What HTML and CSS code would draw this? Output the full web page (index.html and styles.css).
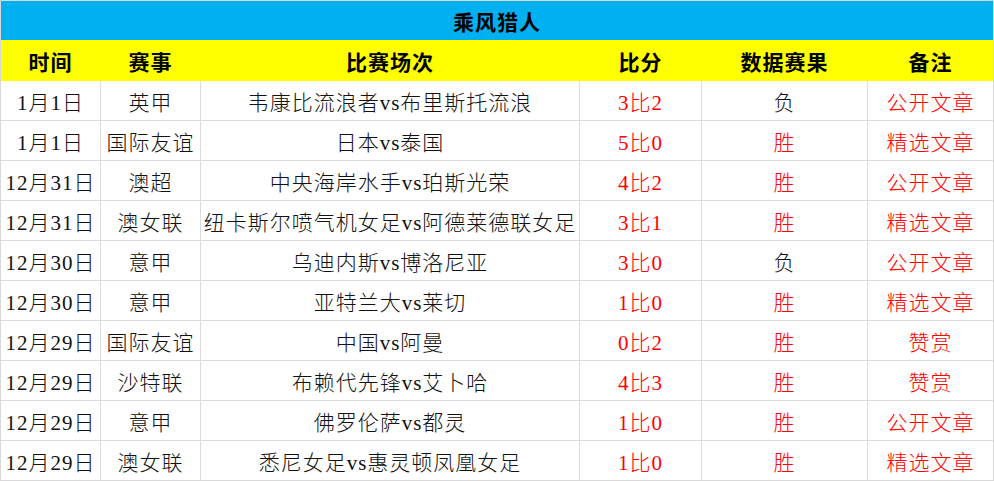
FILE: index.html
```html
<!DOCTYPE html>
<html lang="zh">
<head>
<meta charset="utf-8">
<title>乘风猎人</title>
<link rel="stylesheet" href="styles.css">
</head>
<body>
<div class="sheet">
  <div class="title">乘风猎人</div>
  <div class="row head">
    <div class="c">时间</div><div class="c">赛事</div><div class="c">比赛场次</div><div class="c">比分</div><div class="c">数据赛果</div><div class="c">备注</div>
  </div>
  <div class="row"><div class="c">1月1日</div><div class="c">英甲</div><div class="c">韦康比流浪者vs布里斯托流浪</div><div class="c red">3比2</div><div class="c">负</div><div class="c red">公开文章</div></div>
  <div class="row"><div class="c">1月1日</div><div class="c">国际友谊</div><div class="c">日本vs泰国</div><div class="c red">5比0</div><div class="c red">胜</div><div class="c red">精选文章</div></div>
  <div class="row"><div class="c">12月31日</div><div class="c">澳超</div><div class="c">中央海岸水手vs珀斯光荣</div><div class="c red">4比2</div><div class="c red">胜</div><div class="c red">公开文章</div></div>
  <div class="row"><div class="c">12月31日</div><div class="c">澳女联</div><div class="c">纽卡斯尔喷气机女足vs阿德莱德联女足</div><div class="c red">3比1</div><div class="c red">胜</div><div class="c red">精选文章</div></div>
  <div class="row"><div class="c">12月30日</div><div class="c">意甲</div><div class="c">乌迪内斯vs博洛尼亚</div><div class="c red">3比0</div><div class="c">负</div><div class="c red">公开文章</div></div>
  <div class="row"><div class="c">12月30日</div><div class="c">意甲</div><div class="c">亚特兰大vs莱切</div><div class="c red">1比0</div><div class="c red">胜</div><div class="c red">精选文章</div></div>
  <div class="row"><div class="c">12月29日</div><div class="c">国际友谊</div><div class="c">中国vs阿曼</div><div class="c red">0比2</div><div class="c red">胜</div><div class="c red">赞赏</div></div>
  <div class="row"><div class="c">12月29日</div><div class="c">沙特联</div><div class="c">布赖代先锋vs艾卜哈</div><div class="c red">4比3</div><div class="c red">胜</div><div class="c red">赞赏</div></div>
  <div class="row"><div class="c">12月29日</div><div class="c">意甲</div><div class="c">佛罗伦萨vs都灵</div><div class="c red">1比0</div><div class="c red">胜</div><div class="c red">公开文章</div></div>
  <div class="row"><div class="c">12月29日</div><div class="c">澳女联</div><div class="c">悉尼女足vs惠灵顿凤凰女足</div><div class="c red">1比0</div><div class="c red">胜</div><div class="c red">精选文章</div></div>
</div>
</body>
</html>
```
FILE: styles.css
```css
html, body {
  margin: 0;
  padding: 0;
  background: #ffffff;
}
.sheet {
  width: 994px;
  box-sizing: border-box;
  border: 1px solid #d9d9d9;
  font-family: "Liberation Serif", "Noto Sans CJK SC", serif;
  font-size: 21px;
  font-weight: 300;
  color: #111111;
}
.title {
  height: 39px;
  background: #00b0f0;
  display: flex;
  align-items: center;
  justify-content: center;
  font-weight: bold;
  color: #000000;
  letter-spacing: 1px;
}
.row {
  display: grid;
  grid-template-columns: 99px 100px 379px 122px 166px 126px;
  height: 40px;
  box-sizing: border-box;
  border-bottom: 1px solid #dcdcdc;
}
.row:last-child {
  border-bottom: none;
  height: 39px;
}
.row .c {
  display: flex;
  align-items: center;
  justify-content: center;
  white-space: nowrap;
  letter-spacing: 1px;
  box-sizing: border-box;
}
.row .c + .c {
  border-left: 1px solid #dcdcdc;
}
.row.head {
  height: 41px;
  background: #ffff00;
  border-bottom: none;
  font-weight: bold;
  color: #000000;
}
.row.head .c + .c {
  border-left: 1px solid transparent;
}
.red {
  color: #ff0000;
}
```
